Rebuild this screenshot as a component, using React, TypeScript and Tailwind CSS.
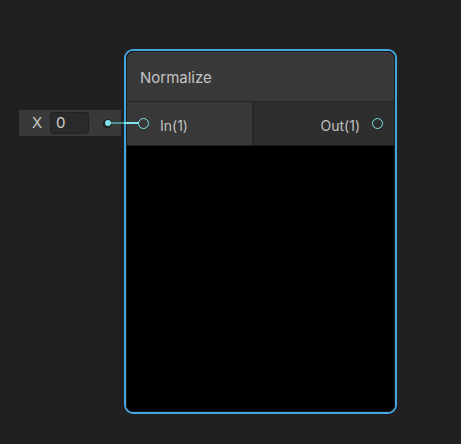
export default function App() {
  return (
    <div
      className="relative h-[444px] w-[461px] overflow-hidden bg-[#202020]"
      style={{ fontFamily: 'Inter, "Noto Sans", sans-serif' }}
    >
      <InputChip />
      <NormalizeNode />
      {/* wire from the chip to the In(1) port */}
      <div className="absolute left-[111px] top-[122px] h-[2px] w-[13px] bg-[#4a8d93]" />
      <div className="absolute left-[124px] top-[122px] h-[2px] w-[15px] bg-[#7fe2ec]" />
    </div>
  )
}

function InputChip() {
  return (
    <div className="absolute left-[19px] top-[110px] flex h-[26px] w-[102px] items-center bg-[#393939] text-[15px] text-[#c4c4c4]">
      <span className="ml-[13px] w-[18px]">X</span>
      <div className="flex h-[22px] w-[39px] items-center rounded-[3px] border border-[#222] bg-[#2a2a2a] pl-[5px] text-[#d2d2d2]">
        0
      </div>
      <div className="ml-[14px] flex h-[9px] w-[9px] items-center justify-center rounded-full bg-[#1f1f1f]">
        <div className="h-[6px] w-[6px] rounded-full bg-[#7fe2ec]" />
      </div>
    </div>
  )
}

function NormalizeNode() {
  return (
    <div className="absolute left-[124px] top-[49px] h-[365px] w-[273px] rounded-[9px] border-2 border-[#45a6df]">
      <div className="flex h-full w-full flex-col overflow-hidden rounded-[7px] border border-[#1a1a1a] bg-black">
        <div className="flex h-[50px] items-center border-b border-[#262626] bg-[#393939] pl-[13px] pt-[3px] text-[15px] text-[#c4c4c4]">
          Normalize
        </div>
        <div className="flex h-[44px] border-b border-[#1c1c1c]">
          <div className="flex w-[127px] items-center border-r-2 border-[#262626] bg-[#383838] pl-[11px] text-[14px] text-[#c0c0c0]">
            <div className="h-[11px] w-[11px] rounded-full border-[1.5px] border-[#7fe2ec]" />
            <span className="ml-[11px] mt-[3px]">In(1)</span>
          </div>
          <div className="flex flex-1 items-center justify-end bg-[#2e2e2e] pr-[11px] text-[14px] text-[#c0c0c0]">
            <span className="mt-[3px]">Out(1)</span>
            <div className="ml-[12px] h-[11px] w-[11px] rounded-full border-[1.5px] border-[#7fe2ec]" />
          </div>
        </div>
        <div className="flex-1 bg-black" />
      </div>
    </div>
  )
}
